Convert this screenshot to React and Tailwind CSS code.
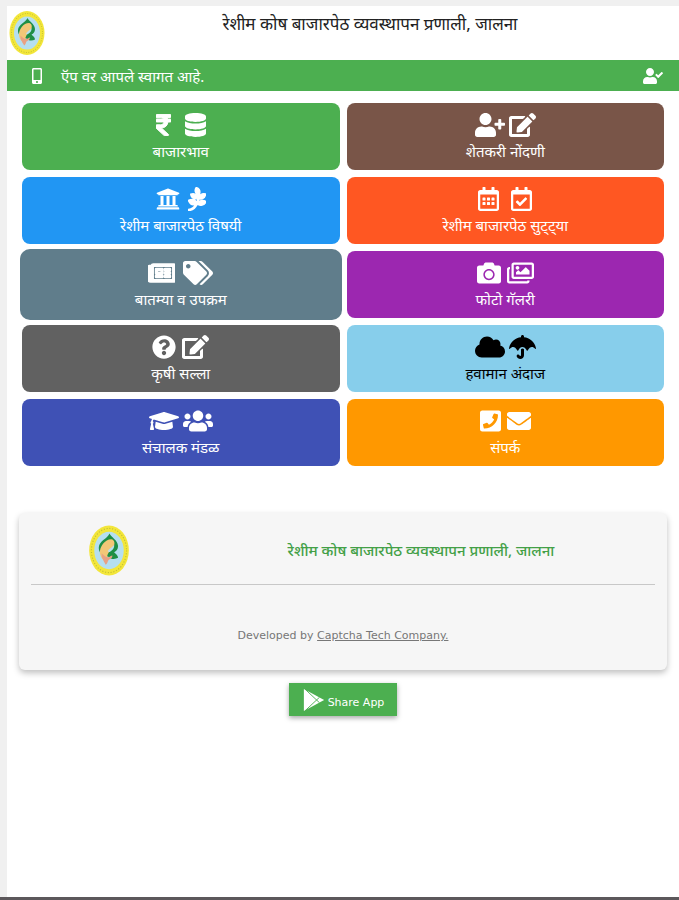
import React from "react";
import {
  FaCamera,
  FaCloud,
  FaDatabase,
  FaEdit,
  FaEnvelope,
  FaGraduationCap,
  FaMobileAlt,
  FaPagelines,
  FaPhoneSquare,
  FaQuestionCircle,
  FaRegCalendarAlt,
  FaRegCalendarCheck,
  FaRegImages,
  FaRegNewspaper,
  FaRupeeSign,
  FaTags,
  FaUmbrella,
  FaUniversity,
  FaUserCheck,
  FaUserPlus,
  FaUsers,
} from "react-icons/fa";

// each icon keeps the width of its own glyph
const menu = [
  { label: "बाजारभाव", icons: [[FaRupeeSign, "w-[15px] stroke-current stroke-20"], [FaDatabase, "w-[21px]"]], color: "bg-[#4caf50] text-white", gap: "gap-3.5" },
  { label: "शेतकरी नोंदणी", icons: [[FaUserPlus, "w-[30px]"], [FaEdit, "w-[27px]"]], color: "bg-[#795548] text-white", gap: "gap-1" },
  { label: "रेशीम बाजारपेठ विषयी", icons: [[FaUniversity, "w-6"], [FaPagelines, "w-[18px] stroke-current stroke-30"]], color: "bg-[#2196f3] text-white", gap: "gap-2" },
  { label: "रेशीम बाजारपेठ सुट्ट्या", icons: [[FaRegCalendarAlt, "w-[21px]"], [FaRegCalendarCheck, "w-[21px]"]], color: "bg-[#ff5722] text-white", gap: "gap-3" },
  { label: "बातम्या व उपक्रम", icons: [[FaRegNewspaper, "w-[27px] stroke-current stroke-30"], [FaTags, "w-[30px]"]], color: "bg-[#607d8b] text-white", gap: "gap-2", active: true },
  { label: "फोटो गॅलरी", icons: [[FaCamera, "w-6"], [FaRegImages, "w-[27px]"]], color: "bg-[#9c27b0] text-white", gap: "gap-1.5" },
  { label: "कृषी सल्ला", icons: [[FaQuestionCircle, "w-6"], [FaEdit, "w-[27px]"]], color: "bg-[#616161] text-white", gap: "gap-1.5" },
  { label: "हवामान अंदाज", icons: [[FaCloud, "w-[30px]"], [FaUmbrella, "w-[27px]"]], color: "bg-[#87ceeb] text-black", gap: "gap-1" },
  { label: "संचालक मंडळ", icons: [[FaGraduationCap, "w-[30px]"], [FaUsers, "w-[30px]"]], color: "bg-[#3f51b5] text-white", gap: "gap-1" },
  { label: "संपर्क", icons: [[FaPhoneSquare, "w-[21px]"], [FaEnvelope, "w-6"]], color: "bg-[#ff9800] text-white", gap: "gap-1.5" },
];

function Logo({ className }) {
  return (
    <svg viewBox="0 0 72 90" className={className} aria-hidden="true">
      <ellipse cx="36" cy="45" rx="35" ry="44" fill="#f3e63a" />
      <ellipse cx="36" cy="45" rx="31" ry="39" fill="none" stroke="#8f9a2c" strokeWidth="2" strokeDasharray="2 3" opacity="0.5" />
      <ellipse cx="36" cy="45" rx="26" ry="33" fill="#b5dff0" />
      <path d="M37 15c3 7 14 11 15 22 0 6-3 9-7 11 3 3 7 6 7 10-5 3-13 3-17-2-10-1-18-7-17-17 1-11 14-14 19-24z" fill="#1f8f45" />
      <path d="M40 25c6 1 7 8 4 13-4 7-9 9-11 16 0 5 2 8-1 13-5-4-11-9-12-17-1-12 9-25 20-25z" fill="#f3c777" />
      <path d="M34 46c4-6 8-6 11-11 1 6-3 10-7 12-2 1-3 1-4-1z" fill="#b5dff0" />
      <path d="M23 50c4 4 7 7 11 7 4 0 5-3 8-3 0 5-4 6-7 8-2 3-2 7-5 8-1-4-3-4-4-8-3-4-3-8-3-12z" fill="#e9a184" />
    </svg>
  );
}

function PlayIcon() {
  return (
    <svg viewBox="0 0 24 26" className="h-6 w-6" aria-hidden="true">
      <path d="M1 1v24l22-12z" fill="#fff" />
      <path d="M2 1l16 15M2 25l16-15" fill="none" stroke="#4caf50" strokeWidth="1" />
    </svg>
  );
}

function MenuCard({ item }) {
  return (
    <a
      href="#"
      className={`flex flex-col items-center rounded-lg pt-[10px] pb-[9px] ${item.color} ${
        item.active ? "ring-2 ring-[#607d8b]" : ""
      }`}
    >
      <span className={`flex h-6 items-center justify-center ${item.gap}`}>
        {item.icons.map(([Icon, style], i) => (
          <Icon key={i} className={`h-6 ${style}`} />
        ))}
      </span>
      <span className="mt-1 text-[15px] leading-5">{item.label}</span>
    </a>
  );
}

function App() {
  return (
    <div className="flex min-h-screen flex-col border-b-3 border-[#5c585b] bg-[#f0f0f0] pt-[6px] pl-[7px] font-['Noto_Sans','DejaVu_Sans',sans-serif]">
      <div className="flex-1 bg-white">
        <header>
          <div className="flex h-[54px] items-start pt-1 pl-[2px]">
            <Logo className="h-[46px] w-9" />
            <h1 className="flex-1 pl-4 text-center text-[17px] leading-7 text-[#222]">
              रेशीम कोष बाजारपेठ व्यवस्थापन प्रणाली, जालना
            </h1>
          </div>
          <div className="flex h-[31px] items-center bg-[#4caf50] pr-4 pl-6 text-white">
            <FaMobileAlt className="h-4 w-3" />
            <p className="ml-[18px] flex-1 text-[15px] leading-5">ऍप वर आपले स्वागत आहे.</p>
            <button type="button" aria-label="Login">
              <FaUserCheck className="h-4 w-5" />
            </button>
          </div>
        </header>

        <nav className="grid grid-cols-2 gap-[7px] px-[15px] pt-3">
          {menu.map((item) => (
            <MenuCard key={item.label} item={item} />
          ))}
        </nav>

        <footer className="mx-3 mt-[47px] rounded-md bg-[#f6f6f6] px-3 pt-3 pb-6 shadow-[0_3px_6px_rgba(0,0,0,0.25)]">
          <div className="grid grid-cols-4 items-center border-b border-[#c8c8c8] pb-2">
            <Logo className="mx-auto h-[51px] w-[42px]" />
            <h2 className="col-span-3 text-center text-[15px] font-medium text-[#43a047]">
              रेशीम कोष बाजारपेठ व्यवस्थापन प्रणाली, जालना
            </h2>
          </div>
          <p className="mt-[41px] text-center font-['DejaVu_Sans',sans-serif] text-[11px] leading-5 text-[#777]">
            Developed by{" "}
            <a href="#" className="underline">
              Captcha Tech Company.
            </a>
          </p>
        </footer>

        <div className="mt-[13px] flex justify-center">
          <button
            type="button"
            className="flex h-[33px] items-center gap-[2px] bg-[#4caf50] px-[13px] font-['DejaVu_Sans',sans-serif] text-[11px] text-white shadow-[0_2px_5px_rgba(0,0,0,0.35)]"
          >
            <PlayIcon />
            <span className="pt-2">Share App</span>
          </button>
        </div>
      </div>
    </div>
  );
}

export default App;
